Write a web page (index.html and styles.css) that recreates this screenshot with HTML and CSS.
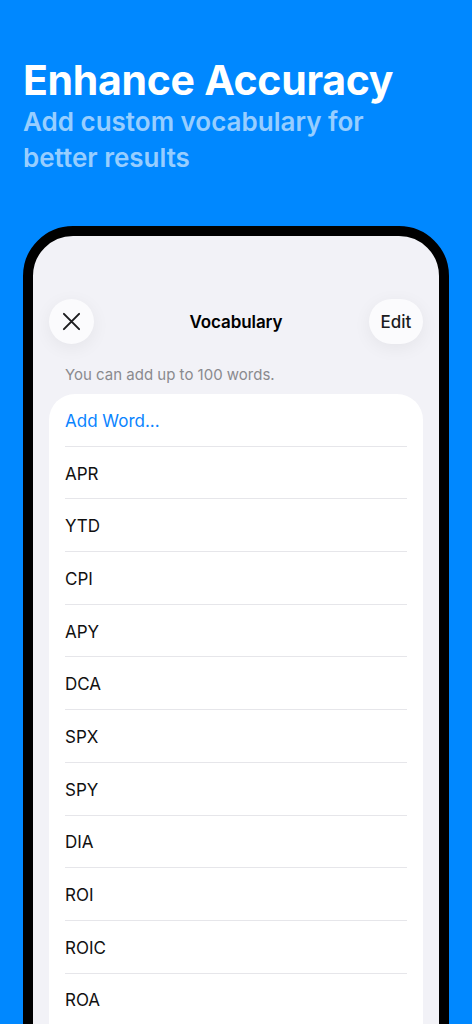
FILE: index.html
```html
<!DOCTYPE html>
<html lang="en">
<head>
<meta charset="utf-8">
<title>Enhance Accuracy</title>
<link rel="stylesheet" href="styles.css">
</head>
<body>
<div class="page">
  <header class="hero">
    <h1 class="hero-title">Enhance Accuracy</h1>
    <p class="hero-sub">Add custom vocabulary for better results</p>
  </header>
  <div class="phone">
    <div class="screen">
      <div class="nav">
        <button class="circle-btn" aria-label="Close">
          <svg width="20" height="20" viewBox="0 0 20 20"><path d="M2 2 L18 18 M18 2 L2 18" stroke="#1c1c1e" stroke-width="2.1" stroke-linecap="round" fill="none"/></svg>
        </button>
        <div class="nav-title">Vocabulary</div>
        <div class="nav-right"><button class="pill-btn">Edit</button></div>
      </div>
      <p class="hint">You can add up to 100 words.</p>
      <ul class="list">
        <li class="row add">Add Word...</li>
        <li class="row">APR</li>
        <li class="row">YTD</li>
        <li class="row">CPI</li>
        <li class="row">APY</li>
        <li class="row">DCA</li>
        <li class="row">SPX</li>
        <li class="row">SPY</li>
        <li class="row">DIA</li>
        <li class="row">ROI</li>
        <li class="row">ROIC</li>
        <li class="row">ROA</li>
      </ul>
    </div>
  </div>
</div>
</body>
</html>
```

FILE: styles.css
```css
* { box-sizing: border-box; }
html, body {
  margin: 0;
  padding: 0;
  height: 1024px;
  overflow: hidden;
  background: #0088ff;
  font-family: Inter, "Noto Sans", "Liberation Sans", sans-serif;
}
.page {
  height: 1024px;
  overflow: hidden;
}
.hero {
  padding: 56px 23px 0 23px;
}
.hero-title {
  margin: 0;
  font-size: 41px;
  line-height: 48px;
  font-weight: 700;
  color: #ffffff;
  letter-spacing: -0.3px;
}
.hero-sub {
  margin: 0;
  font-size: 26px;
  line-height: 36px;
  font-weight: 600;
  color: rgba(255, 255, 255, 0.6);
  width: 360px;
}
.phone {
  margin: 50px 0 0 23px;
  width: 426px;
  height: 900px;
  border: 10px solid #000;
  border-radius: 50px;
  background: #f2f2f7;
  overflow: hidden;
}
.screen {
  padding: 0 16px;
}
.nav {
  display: grid;
  grid-template-columns: 1fr auto 1fr;
  align-items: center;
  padding-top: 63px;
  height: 107px;
}
.nav-right {
  display: flex;
  justify-content: flex-end;
}
.circle-btn {
  width: 45px;
  height: 45px;
  border-radius: 50%;
  border: none;
  background: #fbfbfd;
  box-shadow: 0 4px 18px rgba(0, 0, 0, 0.06);
  display: flex;
  align-items: center;
  justify-content: center;
  padding: 0;
}
.circle-btn svg { width: 19px; height: 19px; }
.nav-title {
  font-size: 17px;
  font-weight: 600;
  color: #000;
  letter-spacing: -0.1px;
}
.pill-btn {
  width: 54px;
  height: 45px;
  border-radius: 23px;
  border: none;
  background: #fbfbfd;
  box-shadow: 0 4px 18px rgba(0, 0, 0, 0.06);
  font-family: inherit;
  font-size: 17px;
  font-weight: 500;
  color: #1c1c1e;
  padding: 0;
}
.hint {
  margin: 0;
  padding: 22px 16px 0 16px;
  height: 51px;
  font-size: 15px;
  line-height: 20px;
  color: #8a8a8e;
}
.list {
  list-style: none;
  margin: 0;
  padding: 0 16px 60px 16px;
  background: #fff;
  border-radius: 26px;
}
.row {
  height: 52.7px;
  display: flex;
  align-items: center;
  padding-top: 2px;
  font-size: 17px;
  color: #111;
  border-bottom: 1px solid #e6e6ea;
}
.row.add { color: #0a84ff; }
```
